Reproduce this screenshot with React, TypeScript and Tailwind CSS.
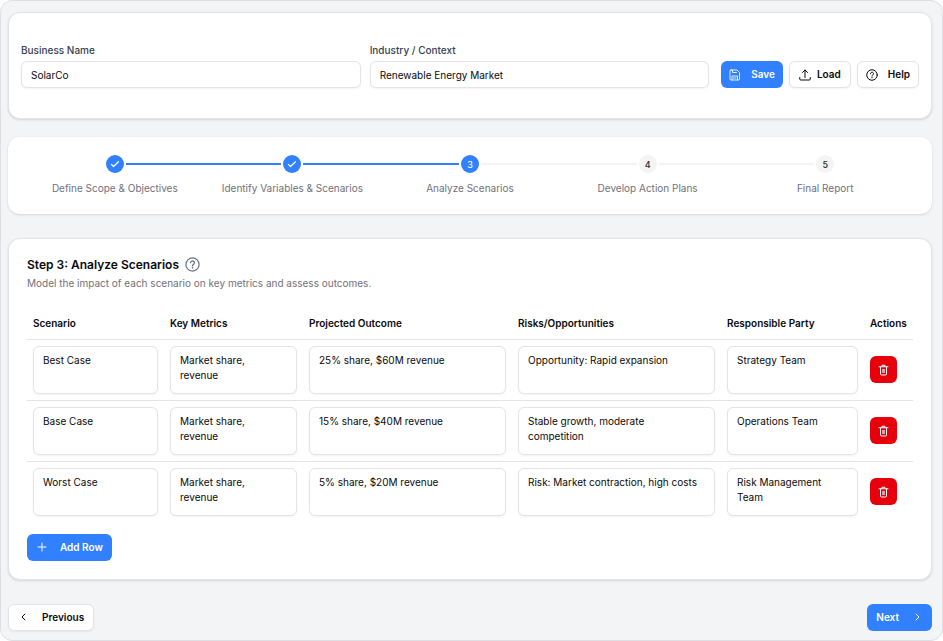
import { useState } from "react";
import type { ButtonHTMLAttributes, ReactNode } from "react";
import clsx from "clsx";

const steps = [
  "Define Scope & Objectives",
  "Identify Variables & Scenarios",
  "Analyze Scenarios",
  "Develop Action Plans",
  "Final Report",
];

const columns = [
  { key: "scenario", label: "Scenario", width: "w-[137px]" },
  { key: "metrics", label: "Key Metrics", width: "w-[139px]" },
  { key: "outcome", label: "Projected Outcome", width: "w-[209px]" },
  { key: "risks", label: "Risks/Opportunities", width: "w-[209px]" },
  { key: "party", label: "Responsible Party", width: "w-[143px]" },
] as const;

type Row = { id: number } & Record<(typeof columns)[number]["key"], string>;

const initialRows: Row[] = [
  { id: 1, scenario: "Best Case", metrics: "Market share, revenue", outcome: "25% share, $60M revenue", risks: "Opportunity: Rapid expansion", party: "Strategy Team" },
  { id: 2, scenario: "Base Case", metrics: "Market share, revenue", outcome: "15% share, $40M revenue", risks: "Stable growth, moderate competition", party: "Operations Team" },
  { id: 3, scenario: "Worst Case", metrics: "Market share, revenue", outcome: "5% share, $20M revenue", risks: "Risk: Market contraction, high costs", party: "Risk Management Team" },
];

function Icon({ size = 12, className, children }: { size?: number; className?: string; children: ReactNode }) {
  return (
    <svg width={size} height={size} viewBox="0 0 24 24" fill="none" stroke="currentColor" strokeWidth="2" strokeLinecap="round" strokeLinejoin="round" className={clsx("shrink-0", className)} aria-hidden="true">
      {children}
    </svg>
  );
}

const helpShape = (
  <>
    <circle cx="12" cy="12" r="10.5" />
    <path d="M9 9.3a3 3 0 1 1 4.6 2.5c-1 .7-1.6 1.2-1.6 2.4" />
    <path d="M12 17.2v.2" strokeWidth="2.4" />
  </>
);

function Button({ variant = "outline", className, ...props }: ButtonHTMLAttributes<HTMLButtonElement> & { variant?: "primary" | "outline" }) {
  return (
    <button
      type="button"
      className={clsx(
        "flex h-[27px] items-center rounded-md text-[10px] leading-[15px] font-semibold",
        variant === "primary" ? "bg-[#3080ff] text-white" : "border border-[#e4e4e7] bg-white text-[#09090b] shadow-xs",
        className
      )}
      {...props}
    />
  );
}

function Field({ id, label, value, onChange }: { id: string; label: string; value: string; onChange: (value: string) => void }) {
  return (
    <div className="min-w-0 flex-1">
      <label htmlFor={id} className="mb-[3px] block text-[10px] leading-[15px] font-medium text-[#364153]">{label}</label>
      <input
        id={id}
        value={value}
        onChange={(e) => onChange(e.target.value)}
        className="block h-[27px] w-full rounded-md border border-[#e4e4e7] bg-white px-[9px] text-[10px] text-[#09090b] shadow-xs outline-none focus:border-[#3080ff]"
      />
    </div>
  );
}

export default function App() {
  const [business, setBusiness] = useState("SolarCo");
  const [industry, setIndustry] = useState("Renewable Energy Market");
  const [current, setCurrent] = useState(2);
  const [rows, setRows] = useState(initialRows);

  const updateRow = (id: number, key: string, value: string) => {
    setRows(prev => prev.map(r => (r.id === id ? { ...r, [key]: value } : r)));
  };

  const addRow = () => {
    setRows(prev => [...prev, { id: Date.now(), scenario: "", metrics: "", outcome: "", risks: "", party: "" }]);
  };

  return (
    <main className="rounded-xl border border-[#dedfe2] bg-[#f3f4f6] pt-[11px] pr-[10px] pb-[9px] pl-[7px] font-['Inter',sans-serif] text-[#09090b]">
      {/* Project details */}
      <header className="flex items-end gap-3 rounded-xl border border-[#e4e4e7] bg-white px-3 py-[30px] shadow-sm">
        <div className="flex min-w-0 flex-1 gap-[9px]">
          <Field id="business" label="Business Name" value={business} onChange={setBusiness} />
          <Field id="industry" label="Industry / Context" value={industry} onChange={setIndustry} />
        </div>
        <div className="flex gap-[6px]">
          <Button variant="primary" className="gap-[10px] px-2">
            <Icon>
              <path d="M4 2h12l5 5v13a2 2 0 0 1-2 2H4a2 2 0 0 1-2-2V4a2 2 0 0 1 2-2z" strokeWidth="1.7" />
              <path d="M6 22v-8h11v8M7 2v5h8M9 18h5" strokeWidth="1.7" />
            </Icon>
            Save
          </Button>
          <Button className="gap-[6px] px-[9px]">
            <Icon>
              <path d="M12 17V2M7 7l5-5 5 5M1.5 17v3a2 2 0 0 0 2 2h17a2 2 0 0 0 2-2v-3" />
            </Icon>
            Load
          </Button>
          <Button className="gap-[10px] px-2">
            <Icon>{helpShape}</Icon>
            Help
          </Button>
        </div>
      </header>

      {/* Stepper */}
      <nav aria-label="Progress" className="mt-[18px] rounded-xl bg-white p-[18px] shadow-sm">
        <ol className="grid grid-cols-5">
          {steps.map((step, i) => (
            <li key={step} className="flex flex-col items-center">
              <div className="flex w-full items-center gap-[2px]">
                <span className={clsx("h-[2px] flex-1", i === 0 ? "bg-transparent" : i <= current ? "bg-[#3080ff]" : "bg-[#f4f4f5]")} />
                <span className={clsx("flex size-[18px] items-center justify-center rounded-full text-[9px] leading-none font-medium", i <= current ? "bg-[#3080ff] text-white" : "bg-[#f4f4f5] text-[#27272a]")}>
                  {i < current ? <Icon size={12}><path d="M5 13l4 4L19 7.5" strokeWidth="2.4" /></Icon> : i + 1}
                </span>
                <span className={clsx("h-[2px] flex-1", i === steps.length - 1 ? "bg-transparent" : i < current ? "bg-[#3080ff]" : "bg-[#f4f4f5]")} />
              </div>
              <span className="mt-2 text-[10px] leading-[15px] text-[#71717a]">{step}</span>
            </li>
          ))}
        </ol>
      </nav>

      {/* Scenario table */}
      <section className="mt-6 rounded-xl border border-[#e4e4e7] bg-white p-[18px] shadow-sm">
        <h1 className="flex items-center gap-[6px] text-[12px] leading-[15px] font-semibold">
          Step 3: Analyze Scenarios
          <Icon size={15} className="text-[#6a7282]">{helpShape}</Icon>
        </h1>
        <p className="mt-1 text-[10px] leading-[15px] text-[#71717a]">Model the impact of each scenario on key metrics and assess outcomes.</p>

        <table className="mt-[18px] w-full table-fixed border-collapse text-[10px] leading-[15px]">
          <thead>
            <tr className="border-b border-[#e4e4e7]">
              {columns.map(col => (
                <th key={col.key} className={clsx("h-[30px] px-[6px] text-left font-semibold", col.width)}>{col.label}</th>
              ))}
              <th className="w-[49px] px-[6px] text-left font-semibold">Actions</th>
            </tr>
          </thead>
          <tbody>
            {rows.map(row => (
              <tr key={row.id} className="border-b border-[#e4e4e7] last:border-b-0">
                {columns.map(col => (
                  <td key={col.key} className="p-[6px]">
                    <textarea
                      aria-label={col.label}
                      value={row[col.key]}
                      onChange={(e) => updateRow(row.id, col.key, e.target.value)}
                      className="block h-12 w-full resize-none rounded-md border border-[#e4e4e7] bg-white py-[6px] pr-[14px] pl-[9px] shadow-xs outline-none focus:border-[#3080ff]"
                    />
                  </td>
                ))}
                <td className="p-[6px]">
                  <button
                    type="button"
                    aria-label={`Delete ${row.scenario}`}
                    onClick={() => setRows(prev => prev.filter(r => r.id !== row.id))}
                    className="flex size-[27px] items-center justify-center rounded-md bg-[#e7000b] text-white"
                  >
                    <Icon>
                      <path d="M2 5.5h18M8 5V2.5h6V5M5 6v14a2 2 0 0 0 2 2h8a2 2 0 0 0 2-2V6" />
                      <path d="M8 10h6v8H8z" fill="currentColor" stroke="none" opacity="0.6" />
                    </Icon>
                  </button>
                </td>
              </tr>
            ))}
          </tbody>
        </table>

        <Button variant="primary" onClick={addRow} className="mt-3 gap-3 px-[9px]">
          <Icon><path d="M12 4v16M4 12h16" /></Icon>
          Add Row
        </Button>
      </section>

      <footer className="mt-6 flex justify-between">
        <Button onClick={() => setCurrent(c => Math.max(0, c - 1))} className="gap-3 px-[9px]">
          <Icon><path d="M14 6l-6 6 6 6" /></Icon>
          Previous
        </Button>
        <Button variant="primary" onClick={() => setCurrent(c => Math.min(steps.length - 1, c + 1))} className="gap-3 px-[9px]">
          Next
          <Icon><path d="M10 6l6 6-6 6" /></Icon>
        </Button>
      </footer>
    </main>
  );
}
